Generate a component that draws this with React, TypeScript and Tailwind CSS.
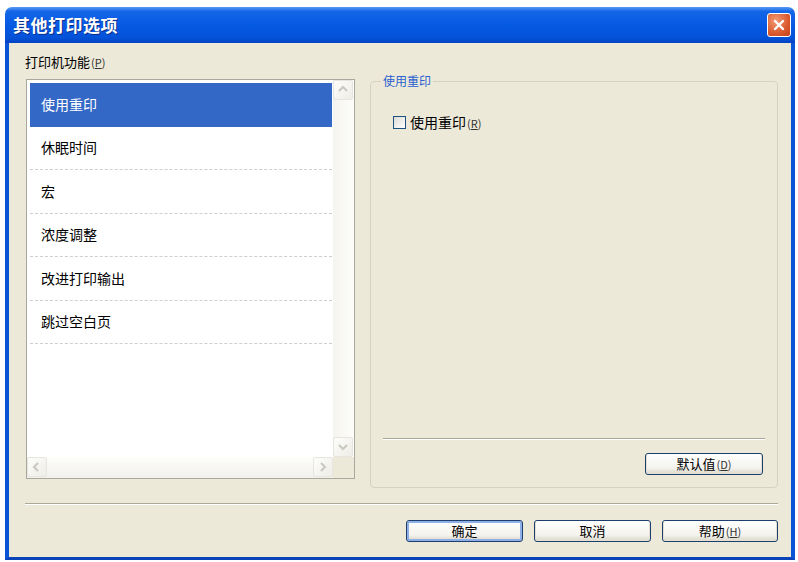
import type { ReactNode } from 'react';

const ITEMS = ['使用重印', '休眠时间', '宏', '浓度调整', '改进打印输出', '跳过空白页'];

function Mnemonic({ ch }: { ch: string }) {
  return (
    <span className="ml-[1px] text-[11px] text-[#333]">
      (<span className="underline">{ch}</span>)
    </span>
  );
}

function XpButton({ children, className = '', focus = false }: { children: ReactNode; className?: string; focus?: boolean }) {
  return (
    <button
      className={[
        'flex h-[22px] items-center justify-center rounded-[3px] border border-[#1c3f6e] text-[13px] text-black',
        'bg-[linear-gradient(180deg,#ffffff_0%,#f4f3ee_70%,#d8d5c8_100%)]',
        focus ? 'shadow-[inset_0_0_0_2px_#8fb0e6]' : 'shadow-[inset_0_-1px_0_1px_#e3e0d2]',
        className,
      ].join(' ')}
    >
      {children}
    </button>
  );
}

function ScrollArrow({ dir }: { dir: 'up' | 'down' | 'left' | 'right' }) {
  const paths = {
    up: 'M3 8 L7 4 L11 8',
    down: 'M3 5 L7 9 L11 5',
    left: 'M8 3 L4 7 L8 11',
    right: 'M5 3 L9 7 L5 11',
  };
  return (
    <div className="flex h-[20px] w-[20px] items-center justify-center rounded-[2px] border border-[#e6e5df] bg-[linear-gradient(135deg,#fdfdfb,#eeede6)]">
      <svg width="14" height="14" viewBox="0 0 14 14">
        <path d={paths[dir]} fill="none" stroke="#c9c8c0" strokeWidth="2" />
      </svg>
    </div>
  );
}

export default function App() {
  return (
    <div className="h-[562px] w-[798px] overflow-hidden bg-white font-['Noto_Sans_CJK_SC','Noto_Sans',sans-serif]">
      <div className="ml-[5px] mt-[7px] flex h-[553px] w-[790px] flex-col overflow-hidden rounded-t-[7px]">
        {/* title bar */}
        <div className="flex h-[36px] items-center justify-between bg-[linear-gradient(180deg,#5a9af5_0%,#1466e8_12%,#0558e2_55%,#0452d8_85%,#0343c4_100%)] pl-[8px] pr-[4px]">
          <span className="text-[17px] font-bold tracking-[0.5px] text-white [text-shadow:1px_1px_0_#0a2f8a]">其他打印选项</span>
          <div className="flex h-[24px] w-[24px] items-center justify-center rounded-[3px] border border-white bg-[radial-gradient(circle_at_35%_30%,#f29a74,#db5a2e_60%,#c2401c)]">
            <svg width="14" height="14" viewBox="0 0 14 14">
              <path d="M3 3 L11 11 M11 3 L3 11" stroke="white" strokeWidth="2.4" strokeLinecap="round" />
            </svg>
          </div>
        </div>

        {/* body */}
        <div className="flex flex-1 flex-col border-x-[4px] border-b-[3px] border-x-[#0a55d6] border-b-[#0843b8] bg-[#ece9d8] pl-[16px]">
          <div className="mt-[11px] h-[16px] text-[13px] leading-[16px] text-black">
            打印机功能<Mnemonic ch="P" />
          </div>

          <div className="mt-[9px] flex h-[410px] items-start">
            {/* list box */}
            <div className="ml-[1px] flex h-[400px] w-[329px] flex-col border border-[#a9a89f] bg-white">
              <div className="flex flex-1">
                <div className="flex-1 pl-[3px] pt-[3px]">
                  {ITEMS.map((item, i) => (
                    <div
                      key={item}
                      className={[
                        'flex h-[43.5px] w-[302px] items-center pl-[11px] text-[14px]',
                        i === 0 ? 'bg-[#3468c6] text-white' : 'border-b border-dashed border-[#cfcfcf] text-black',
                      ].join(' ')}
                    >
                      {item}
                    </div>
                  ))}
                </div>
                <div className="flex w-[21px] flex-col justify-between bg-[linear-gradient(90deg,#f5f4ef,#fdfdfa)]">
                  <ScrollArrow dir="up" />
                  <ScrollArrow dir="down" />
                </div>
              </div>
              <div className="flex h-[21px]">
                <div className="flex flex-1 justify-between bg-[linear-gradient(180deg,#fdfdfa,#f2f1ec)]">
                  <ScrollArrow dir="left" />
                  <ScrollArrow dir="right" />
                </div>
                <div className="w-[21px] bg-[#ece9d8]" />
              </div>
            </div>

            {/* group box */}
            <fieldset className="ml-[15px] h-[416px] w-[408px] -mt-[7px] rounded-[4px] border border-[#d5d2c2] px-[12px]">
              <legend className="-ml-[2px] px-[2px] text-[12px] text-[#2a62d0]">使用重印</legend>
              <div className="flex h-full flex-col">
                <div className="mt-[22px] ml-[10px] flex items-center">
                  <div className="h-[13px] w-[13px] border border-[#1c5180] bg-[linear-gradient(135deg,#dcdbd5,#ffffff)]" />
                  <span className="ml-[4px] text-[14px] text-black">
                    使用重印<Mnemonic ch="R" />
                  </span>
                </div>
                <div className="mt-auto mb-[12px] flex flex-col items-end">
                  <div className="h-[2px] w-full border-t border-b border-t-[#aca899] border-b-white" />
                  <XpButton className="mt-[13px] mr-[2px] w-[118px]">
                    默认值<Mnemonic ch="D" />
                  </XpButton>
                </div>
              </div>
            </fieldset>
          </div>

          {/* separator */}
          <div className="mt-[14px] h-[2px] w-[753px] border-t border-b border-t-[#aca899] border-b-white" />

          <div className="mt-[15px] flex w-[753px] justify-end gap-[11px]">
            <XpButton focus className="w-[117px]">确定</XpButton>
            <XpButton className="w-[117px]">取消</XpButton>
            <XpButton className="w-[116px]">
              帮助<Mnemonic ch="H" />
            </XpButton>
          </div>
        </div>
      </div>
    </div>
  );
}
